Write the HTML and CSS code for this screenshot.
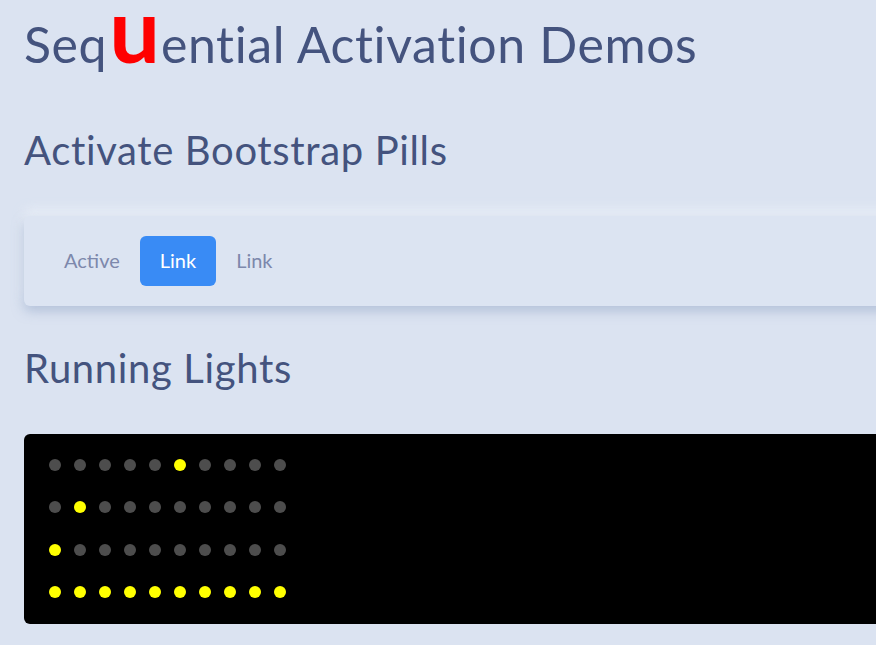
FILE: index.html
```html
<!DOCTYPE html>
<html lang="en">
<head>
<meta charset="utf-8">
<title>Sequential Activation Demos</title>
<link rel="stylesheet" href="styles.css">
</head>
<body>
<main class="page">
  <h1 class="title">Seq<span class="big-u">u</span>ential Activation Demos</h1>

  <h2 class="section-title section-first">Activate Bootstrap Pills</h2>
  <div class="card">
    <ul class="pills">
      <li><a class="pill">Active</a></li>
      <li><a class="pill pill-active">Link</a></li>
      <li><a class="pill">Link</a></li>
    </ul>
  </div>

  <h2 class="section-title section-second">Running Lights</h2>
  <div class="lights">
    <div class="row">
      <span class="dot"></span><span class="dot"></span><span class="dot"></span><span class="dot"></span><span class="dot"></span><span class="dot on"></span><span class="dot"></span><span class="dot"></span><span class="dot"></span><span class="dot"></span>
    </div>
    <div class="row">
      <span class="dot"></span><span class="dot on"></span><span class="dot"></span><span class="dot"></span><span class="dot"></span><span class="dot"></span><span class="dot"></span><span class="dot"></span><span class="dot"></span><span class="dot"></span>
    </div>
    <div class="row">
      <span class="dot on"></span><span class="dot"></span><span class="dot"></span><span class="dot"></span><span class="dot"></span><span class="dot"></span><span class="dot"></span><span class="dot"></span><span class="dot"></span><span class="dot"></span>
    </div>
    <div class="row">
      <span class="dot on"></span><span class="dot on"></span><span class="dot on"></span><span class="dot on"></span><span class="dot on"></span><span class="dot on"></span><span class="dot on"></span><span class="dot on"></span><span class="dot on"></span><span class="dot on"></span>
    </div>
  </div>
</main>
</body>
</html>
```

FILE: styles.css
```css
html, body {
  margin: 0;
  padding: 0;
  overflow: hidden;
}

body {
  background: #dbe3f1;
  color: #44537e;
  font-family: "Lato", "Open Sans", sans-serif;
}

.page {
  padding: 0 0 0 24px;
  width: 1000px;
}

.title {
  margin: 0;
  padding-top: 13px;
  font-size: 50px;
  font-weight: 400;
  line-height: 60px;
  letter-spacing: 0.6px;
}

.big-u {
  color: #ff0000;
  font-weight: 700;
  font-size: 90px;
  line-height: 30px;
  letter-spacing: 0;
  margin: 0 1px 0 2px;
}

.section-title {
  margin: 0;
  font-size: 40px;
  font-weight: 400;
  line-height: 48px;
  letter-spacing: 0.65px;
}

.section-first {
  margin-top: 52px;
}

.section-second {
  margin-top: 38px;
}

.card {
  margin-top: 42px;
  padding: 20px;
  background: #dce4f2;
  border-radius: 6px;
  box-shadow: 0 5px 12px rgba(140, 160, 196, 0.5), 0 -6px 12px rgba(242, 246, 252, 0.7);
}

.pills {
  list-style: none;
  margin: 0;
  padding: 0;
  display: flex;
}

.pill {
  display: flex;
  align-items: center;
  height: 50px;
  padding: 0 20px 2px;
  box-sizing: border-box;
  border-radius: 6px;
  font-size: 20px;
  color: #7d88ac;
}

.pill-active {
  background: #398bf5;
  color: #ffffff;
}

.lights {
  margin-top: 42px;
  background: #000000;
  border-radius: 6px;
  padding: 25px 25px 26px;
  display: flex;
  flex-direction: column;
  gap: 30.4px;
}

.row {
  display: flex;
  gap: 13px;
}

.dot {
  width: 12px;
  height: 12px;
  border-radius: 50%;
  background: #4d4d4d;
}

.dot.on {
  background: #ffff00;
}
```
